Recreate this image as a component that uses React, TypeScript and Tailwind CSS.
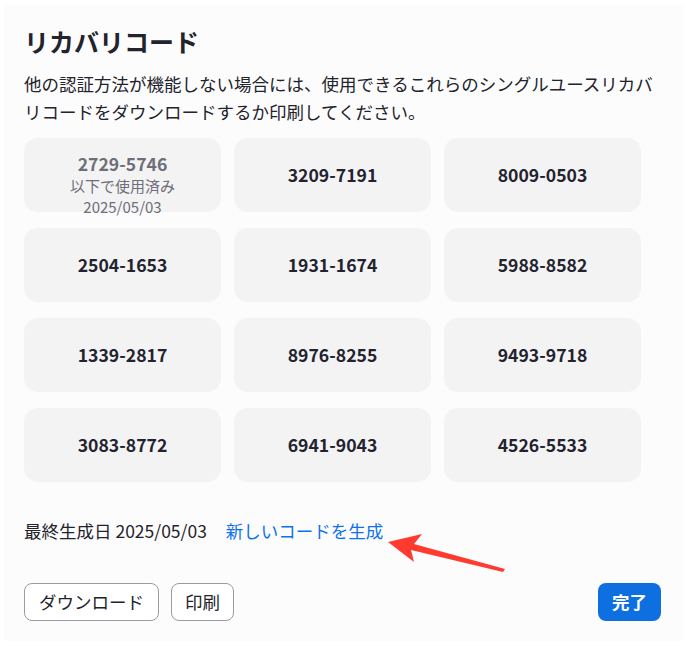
import React from "react";

const codes = [
  "3209-7191",
  "8009-0503",
  "2504-1653",
  "1931-1674",
  "5988-8582",
  "1339-2817",
  "8976-8255",
  "9493-9718",
  "3083-8772",
  "6941-9043",
  "4526-5533",
];

export default function App() {
  return (
    <div
      className="w-[687px] h-[646px] bg-white pl-[4px] pt-[5px] pr-[4px] pb-[5px]"
      style={{ fontFamily: '"Noto Sans CJK JP", "Noto Sans", sans-serif' }}
    >
      <div className="relative h-full bg-[#fcfcfd] pl-[20px] pt-[18px]">
        <h1 className="text-[25px] font-bold leading-[36px] text-[#23232b]">リカバリコード</h1>
        <p className="mt-[11px] w-[645px] text-[17.5px] leading-[28px] text-[#23232b]">
          他の認証方法が機能しない場合には、使用できるこれらのシングルユースリカバリコードをダウンロードするか印刷してください。
        </p>
        <div className="mt-[12px] grid w-[617px] grid-cols-3 gap-x-[13px] gap-y-[16px]">
          <div className="flex h-[74px] flex-col items-center justify-start rounded-[14px] bg-[#f3f3f4] pt-[15px] text-[#6e6e78]">
            <div className="text-[17.6px] font-bold leading-[22px]">2729-5746</div>
            <div className="text-[15px] leading-[21px]">以下で使用済み</div>
            <div className="text-[15px] leading-[21px]">2025/05/03</div>
          </div>
          {codes.map((c) => (
            <div
              key={c}
              className="flex h-[74px] items-center justify-center rounded-[14px] bg-[#f3f3f4] text-[17.6px] font-bold text-[#23232f]"
            >
              {c}
            </div>
          ))}
        </div>
        <div className="mt-[36px] flex items-center text-[17.5px] leading-[26px]">
          <span className="text-[#23232b]">最終生成日 2025/05/03</span>
          <span className="ml-[19px] text-[#0e72ed]">新しいコードを生成</span>
        </div>
        <svg
          className="absolute left-[380px] top-[520px]"
          width="130"
          height="55"
          viewBox="0 0 130 55"
        >
          <polygon points="4,17 38,9 30,19 121,44 119,47 27,25 30,37" fill="#ff3b30" />
        </svg>
        <div className="mt-[39px] flex w-[637px] items-center">
          <button className="h-[38px] rounded-[8px] border border-[#9b9ba3] bg-white px-[14px] text-[17.5px] text-[#23232b]">
            ダウンロード
          </button>
          <button className="ml-[12px] h-[38px] rounded-[8px] border border-[#9b9ba3] bg-white px-[13px] text-[17.5px] text-[#23232b]">
            印刷
          </button>
          <button className="ml-auto h-[38px] rounded-[8px] bg-[#0e6fe0] px-[14px] text-[17.5px] font-bold text-white">
            完了
          </button>
        </div>
      </div>
    </div>
  );
}
